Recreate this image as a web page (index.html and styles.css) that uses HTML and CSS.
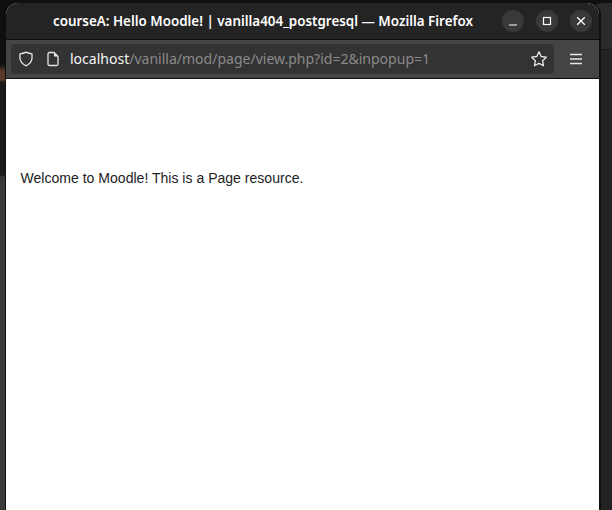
FILE: index.html
```html
<!DOCTYPE html>
<html lang="en">
<head>
<meta charset="utf-8">
<title>courseA: Hello Moodle!</title>
<link rel="stylesheet" href="styles.css">
</head>
<body>
<div class="desktop">
  <div class="behind-left"></div>
  <div class="behind-right"></div>
  <main class="window">
    <header class="titlebar">
      <h1 class="title">courseA: Hello Moodle! | vanilla404_postgresql — Mozilla Firefox</h1>
      <div class="controls">
        <button class="ctl" aria-label="Minimize"><svg width="16" height="16" viewBox="0 0 16 16"><path d="M4 12h8" stroke="#fff" stroke-width="1.2"/></svg></button>
        <button class="ctl" aria-label="Maximize"><svg width="16" height="16" viewBox="0 0 16 16"><rect x="4.5" y="4.500" width="7" height="7" fill="none" stroke="#fff" stroke-width="1.200"/></svg></button>
        <button class="ctl" aria-label="Close"><svg width="16" height="16" viewBox="0 0 16 16"><path d="M4.200 4.200l7.600 7.600M11.800 4.200l-7.600 7.600" stroke="#fff" stroke-width="1.300"/></svg></button>
      </div>
    </header>
    <nav class="toolbar">
      <div class="urlbar">
        <svg class="shield" width="16" height="16" viewBox="0 0 16 16"><path d="M8 1.200c2 1 4 1.500 6 1.700v4.200c0 3.500-2.500 6-6 7.700C4.500 13.100 2 10.600 2 7.100V2.900c2-.2 4-.7 6-1.700z" fill="none" stroke="#e6e6e6" stroke-width="1.300" stroke-linejoin="round"/></svg>
        <svg class="page" width="16" height="16" viewBox="0 0 16 16"><path d="M3 3c0-1 .6-1.500 1.500-1.500h4.500l4 4V13c0 .9-.6 1.500-1.500 1.500h-7C3.600 14.500 3 13.900 3 13z" fill="none" stroke="#e6e6e6" stroke-width="1.300"/><path d="M9 1.500V5.500h4z" fill="#e6e6e6"/></svg>
        <span class="url"><span class="host">localhost</span>/vanilla/mod/page/view.php?id=2&amp;inpopup=1</span>
        <svg class="star" width="18" height="18" viewBox="0 0 18 18"><path d="M9 1.800l2.200 4.700 5.100.7-3.700 3.500.9 5.100L9 13.400l-4.500 2.400.9-5.100L1.700 7.200l5.100-.7z" fill="none" stroke="#e6e6e6" stroke-width="1.300" stroke-linejoin="round"/></svg>
      </div>
      <svg class="menu" width="14" height="12" viewBox="0 0 14 12"><path d="M1 1.500h12M1 6h12M1 10.500h12" stroke="#e6e6e6" stroke-width="1.300"/></svg>
    </nav>
    <article class="content">
      <p class="message">Welcome to Moodle! This is a Page resource.</p>
    </article>
  </main>
</div>
</body>
</html>
```

FILE: styles.css
```css
* { box-sizing: border-box; }
html, body { margin: 0; height: 100%; overflow: hidden; }
body { background: #0f0f0f; }
.desktop { position: relative; width: 612px; height: 510px; padding: 3px 0 0 6px; }
.behind-left { position: absolute; left: 0; top: 65px; width: 5px; height: 445px; background: linear-gradient(#141414 0, #5a3a28 6px, #5a3a28 15px, #1a1a1a 17px, #1a1a1a 110px, #3a3a3a 112px); }
.behind-right { position: absolute; left: 592px; top: 3px; width: 20px; height: 507px; background: linear-gradient(#2a2a2a 46px, #1a1a1a 46px, #1a1a1a 47px, #222 47px); border-radius: 10px 0 0 0; }
.window { position: relative; width: 593px; height: 507px; display: flex; flex-direction: column; border-radius: 12px 12px 0 0; overflow: hidden; background: #fff; box-shadow: 1px 0 0 #0f0f0f, 2px 0 0 #0f0f0f; }
.titlebar { height: 37px; flex: none; background: #242424; border-bottom: 1px solid #0e0e0e; display: flex; align-items: center; padding: 0 7px 0 47px; }
.title { margin: 0; flex: 1; font: 600 13.4px/18px "Noto Sans", sans-serif; color: #fff; white-space: nowrap; }
.controls { display: flex; gap: 12px; }
.ctl { width: 22px; height: 22px; padding: 0; border: 0; border-radius: 50%; background: #393939; display: flex; align-items: center; justify-content: center; }
.toolbar { height: 39px; flex: none; background: #444; border-bottom: 1px solid #0e0e0e; display: flex; align-items: center; padding: 0 14px 0 5px; gap: 15px; }
.urlbar { width: 543px; height: 30px; background: #333; border-radius: 4px; display: flex; align-items: center; padding: 0 6px 0 7px; }
.shield { flex: none; margin-right: 11px; }
.page { flex: none; margin-right: 9px; }
.url { flex: 1; font: 400 14.03px/18px "Noto Sans", sans-serif; color: #8a8a8a; white-space: nowrap; }
.host { color: #f4f4f4; }
.star, .menu { flex: none; }
.content { flex: 1; background: #fff; padding: 90px 14.500px 0; }
.message { margin: 0; font: 400 14.05px/18px "Liberation Sans", Arial, sans-serif; color: #1d2125; }
```
